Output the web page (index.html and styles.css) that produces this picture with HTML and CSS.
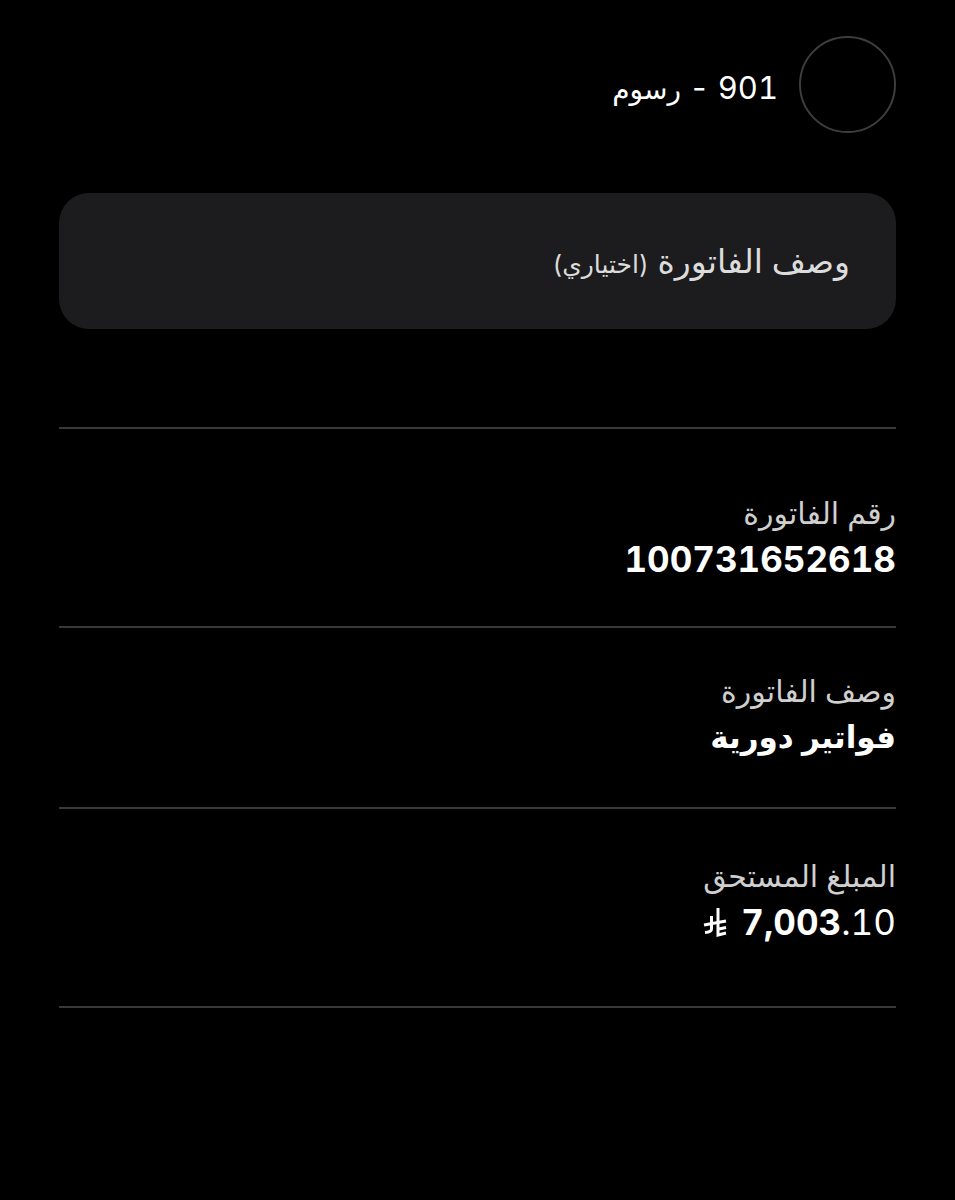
FILE: index.html
```html
<!DOCTYPE html>
<html lang="ar" dir="rtl">
  <head>
    <meta charset="utf-8">
    <title>تفاصيل الفاتورة</title>
    <link rel="stylesheet" href="styles.css">
  </head>
  <body>
    <div class="biller">
      <div class="biller-logo"></div>
      <div class="biller-name">901 - <span class="ar">رسوم</span></div>
    </div>

    <div class="note-field">
      <span class="note-placeholder">وصف الفاتورة <small>(اختياري)</small></span>
    </div>

    <div class="details">
      <div class="detail detail-first">
        <div class="detail-label">رقم الفاتورة</div>
        <div class="detail-value"><span class="ltr">100731652618</span></div>
      </div>

      <div class="detail">
        <div class="detail-label">وصف الفاتورة</div>
        <div class="detail-value ar-value">فواتير دورية</div>
      </div>

      <div class="detail detail-last">
        <div class="detail-label">المبلغ المستحق</div>
        <div class="detail-value amount">
          <span class="ltr">7,003<span class="fraction">.10</span></span>
          <!-- riyal sign -->
          <svg class="riyal" viewBox="0 0 24 30" width="24" height="30" aria-label="ريال">
            <path d="M8.5 9 V22 Q8.5 25 2 25.5" />
            <path d="M15 1 V28 L23 26" />
            <path d="M1 18 L23 14" />
            <path d="M16 22 L23 20.5" />
          </svg>
        </div>
      </div>
    </div>
  </body>
</html>
```

FILE: styles.css
```css
body {
  margin: 0;
  padding: 0 59px;
  background-color: #000;
  color: #fff;
  font-family: Inter, "DejaVu Sans", sans-serif;
  font-variant-numeric: tabular-nums;
}

.ltr {
  direction: ltr;
  unicode-bidi: isolate;
}

/* header */
.biller {
  display: flex;
  align-items: center;
  gap: 21px;
  padding-top: 36px;
}

.biller-logo {
  width: 93px;
  height: 93px;
  border: 2px solid #3d3d3f;
  border-radius: 50%;
  flex-shrink: 0;
}

.biller-name {
  font-size: 31px;
  line-height: 40px;
  margin-top: 8px;
}

.biller-name .ar {
  font-size: 28px;
}

/* description input */
.note-field {
  display: flex;
  align-items: center;
  height: 136px;
  margin-top: 60px;
  padding: 0 46px;
  background-color: #1c1c1e;
  border-radius: 30px;
}

.note-placeholder {
  font-size: 33px;
  color: #dcdcdc;
}

.note-placeholder small {
  font-size: 25px;
}

/* info rows */
.details {
  margin-top: 98px;
  border-bottom: 2px solid #38383a;
}

.detail {
  height: 181px;
  padding-top: 44px;
  box-sizing: border-box;
  border-top: 2px solid #38383a;
}

.detail-first {
  height: 199px;
  padding-top: 65px;
}

.detail-last {
  height: 199px;
  padding-top: 48px;
}

.detail-label {
  font-size: 30px;
  line-height: 38px;
  color: #cfcfcf;
}

.detail-value {
  margin-top: 4px;
  font-size: 35px;
  line-height: 46px;
  font-weight: 700;
}

.ar-value {
  font-size: 31px;
}

.amount {
  display: flex;
  align-items: center;
  justify-content: flex-start;
  gap: 14px;
}

.fraction {
  font-weight: 400;
}

.riyal path {
  fill: none;
  stroke: #fff;
  stroke-width: 3;
}
```
